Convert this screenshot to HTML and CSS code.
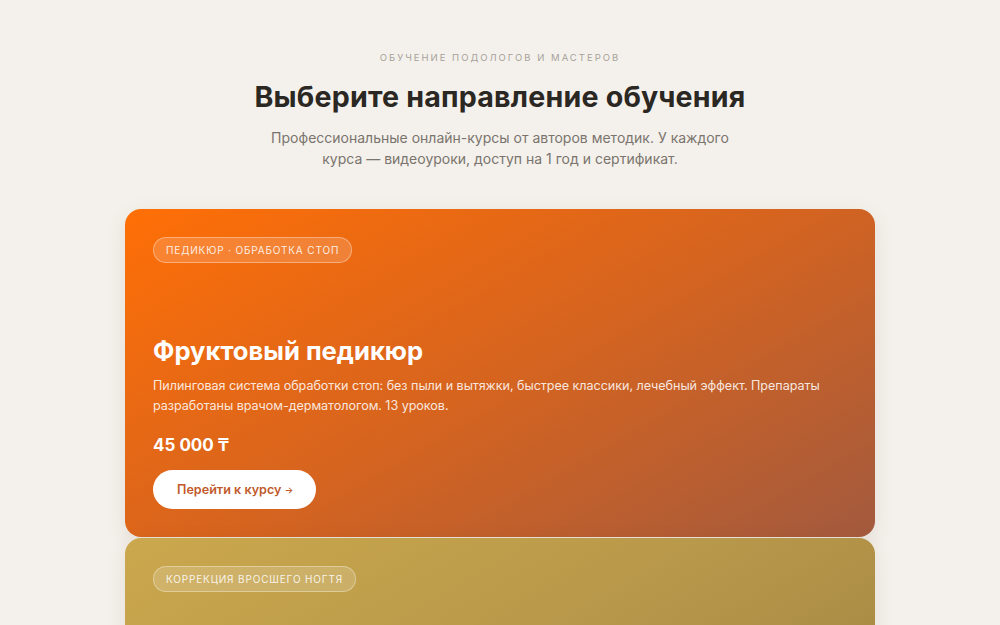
FILE: index.html
```html
<!DOCTYPE html>
<html lang="ru">
<head>
<meta charset="utf-8">
<title>Выберите направление обучения</title>
<link rel="stylesheet" href="styles.css">
</head>
<body>
<section class="courses">
  <header class="intro">
    <div class="eyebrow">Обучение подологов и мастеров</div>
    <h1 class="title">Выберите направление обучения</h1>
    <p class="lead">Профессиональные онлайн-курсы от авторов методик. У каждого курса — видеоуроки, доступ на 1 год и сертификат.</p>
  </header>
  <div class="stack">
    <article class="card card-orange">
      <span class="tag">Педикюр · обработка стоп</span>
      <div class="card-body">
        <h2 class="card-title">Фруктовый педикюр</h2>
        <p class="card-text">Пилинговая система обработки стоп: без пыли и вытяжки, быстрее классики, лечебный эффект. Препараты разработаны врачом-дерматологом. 13 уроков.</p>
        <div class="price">45 000 ₸</div>
        <a class="btn btn-orange" href="#">Перейти к курсу <span class="arrow">→</span></a>
      </div>
    </article>
    <article class="card card-gold">
      <span class="tag">Коррекция вросшего ногтя</span>
    </article>
  </div>
</section>
</body>
</html>
```
FILE: styles.css
```css
* { box-sizing: border-box; }
html, body { margin: 0; padding: 0; }
body {
  background: #f4f1ec;
  font-family: "Inter", "Open Sans", sans-serif;
  color: #2a2622;
  overflow: hidden;
  height: 625px;
}
.courses { padding-top: 51px; }
.intro { text-align: center; }
.eyebrow {
  font-size: 9.5px;
  letter-spacing: 2px;
  text-transform: uppercase;
  color: #a7a19a;
  line-height: 14px;
}
.title {
  margin: 14px 0 0;
  font-size: 28.6px;
  line-height: 36px;
  font-weight: 700;
  color: #2b2723;
  letter-spacing: 0.2px;
}
.lead {
  margin: 12px auto 0;
  max-width: 470px;
  font-size: 14px;
  line-height: 21px;
  color: #7a746d;
}
.stack {
  width: 750px;
  margin: 40px auto 0;
  display: flex;
  flex-direction: column;
  gap: 1px;
}
.card {
  border-radius: 16px;
  padding: 28px;
  min-height: 328px;
  display: flex;
  flex-direction: column;
  align-items: flex-start;
  color: #fff;
  box-shadow: 0 6px 20px rgba(120, 80, 40, 0.12);
}
.card-orange { background: linear-gradient(150deg, #ff6f06 0%, #d6641f 50%, #a35a3e 100%); }
.card-gold { background: linear-gradient(150deg, #cba84d 0%, #b8984a 45%, #9a7e3f 100%); }
.tag {
  display: inline-block;
  font-size: 10px;
  line-height: 14px;
  letter-spacing: 0.85px;
  text-transform: uppercase;
  padding: 5px 12px;
  border-radius: 20px;
  border: 1px solid rgba(255,255,255,0.35);
  background: rgba(255,255,255,0.16);
  color: rgba(255,255,255,0.88);
}
.card-body { margin-top: auto; }
.card-title {
  margin: 0 0 0;
  font-size: 25.6px;
  line-height: 30px;
  font-weight: 700;
  position: relative;
  top: 1px;
}
.card-text {
  margin: 11px 0 0;
  font-size: 12.6px;
  line-height: 20px;
  letter-spacing: -0.05px;
  color: rgba(255,255,255,0.86);
}
.price {
  margin-top: 18px;
  font-size: 17px;
  line-height: 22px;
  font-weight: 700;
}
.btn {
  display: inline-block;
  margin-top: 14px;
  height: 39px;
  line-height: 39px;
  padding: 0 23px 0 24px;
  border-radius: 20px;
  background: #fff;
  font-size: 12.6px;
  font-weight: 600;
  text-decoration: none;
}
.btn-orange { color: #c1592a; }
.arrow { font-size: 9px; vertical-align: 1px; }
```
